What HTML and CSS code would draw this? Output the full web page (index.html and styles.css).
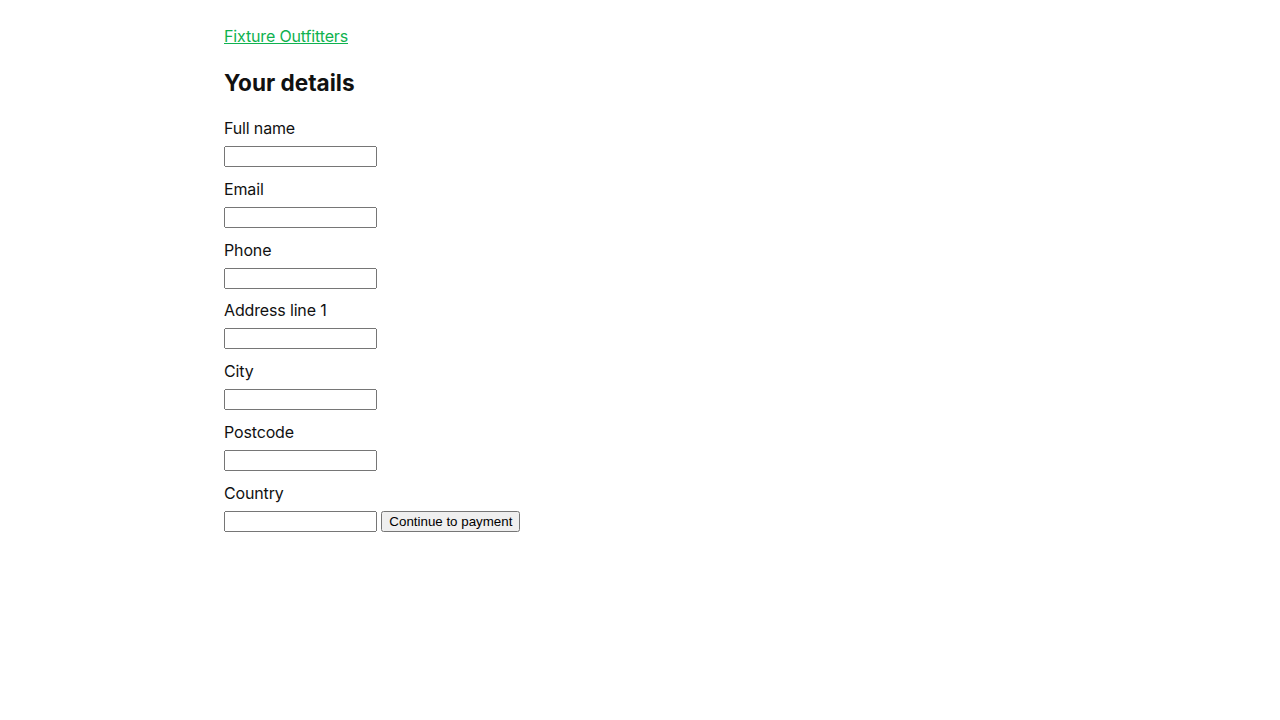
FILE: index.html
```html
<!DOCTYPE html>
<html lang="en">
<head>
    <meta charset="UTF-8">
    <meta name="viewport" content="width=device-width, initial-scale=1.0">
    <title>Your details - Fixture Outfitters</title>
    <link rel="stylesheet" href="styles.css">
</head>
<body>
    <main class="page">
        <a class="brand" href="#">Fixture Outfitters</a>
        <h1 class="title">Your details</h1>
        <form class="details-form">
            <label class="field-label" for="name">Full name</label>
            <input id="name" type="text">
            <label class="field-label" for="email">Email</label>
            <input id="email" type="text">
            <label class="field-label" for="phone">Phone</label>
            <input id="phone" type="text">
            <label class="field-label" for="address1">Address line 1</label>
            <input id="address1" type="text">
            <label class="field-label" for="city">City</label>
            <input id="city" type="text">
            <label class="field-label" for="postcode">Postcode</label>
            <input id="postcode" type="text">
            <label class="field-label" for="country">Country</label>
            <input id="country" type="text">
            <button type="submit">Continue to payment</button>
        </form>
    </main>
</body>
</html>
```

FILE: styles.css
```css
* {
    box-sizing: border-box;
}

body {
    margin: 0;
    background: #fff;
    color: #111;
    font-family: Inter, "Noto Sans", sans-serif;
    font-size: 16px;
    line-height: 24px;
    letter-spacing: -0.15px;
}

.page {
    max-width: 832px;
    margin: 0 auto;
    padding-top: 24px;
}

.brand {
    display: inline-block;
    color: #0fb24f;
    text-decoration: underline;
}

.title {
    margin: 22px 0 20px;
    font-size: 22.6px;
    line-height: 26px;
    font-weight: 700;
    letter-spacing: 0;
}

.field-label {
    display: block;
    margin: 9.83px 0 3px;
}

.field-label:first-child {
    margin-top: 0;
}

.details-form input {
    width: 153px;
    letter-spacing: 0;
}

.details-form button {
    letter-spacing: 0;
}
```
